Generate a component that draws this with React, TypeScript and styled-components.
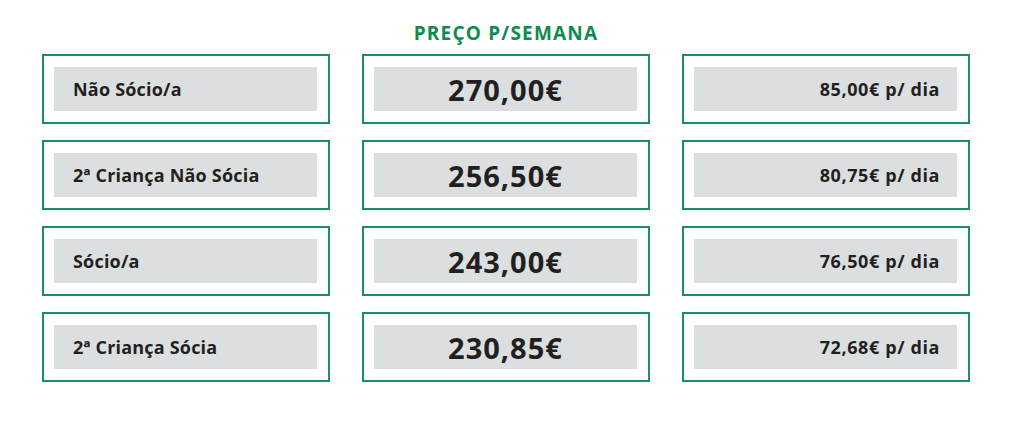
import React from 'react'
import styled, {createGlobalStyle} from 'styled-components'

const GlobalStyle = createGlobalStyle`
  html, body {
    margin: 0;
    padding: 0;
    background: #ffffff;
    font-family: "Open Sans", "Liberation Sans", sans-serif;
  }
`

const Page = styled.div`
  width: 1024px;
  height: 426px;
  box-sizing: border-box;
  padding: 21px 0 0 42px;
`

const Grid = styled.div`
  display: grid;
  grid-template-columns: repeat(3, 288px);
  column-gap: 32px;
  row-gap: 16px;
`

const Heading = styled.h2`
  grid-column: 1 / -1;
  margin: 0 0 -7px;
  text-align: center;
  color: #0f8a52;
  font-size: 19px;
  font-weight: 700;
  line-height: 24px;
  letter-spacing: 1.2px;
`

const Cell = styled.div`
  height: 70px;
  box-sizing: border-box;
  border: 2px solid #18925c;
  padding: 11px 11px 11px 10px;
`

const Inner = styled.div<{$align: 'left' | 'center' | 'right'}>`
  height: 100%;
  background: #dcdfe0;
  display: flex;
  align-items: center;
  justify-content: ${p => p.$align === 'left' ? 'flex-start' : p.$align === 'center' ? 'center' : 'flex-end'};
  padding: 0 ${p => p.$align === 'right' ? '17px' : '0'} 0 ${p => p.$align === 'left' ? '19px' : '0'};
  color: #231f20;
  font-weight: 700;
`

const Label = styled.span<{$spread?: boolean}>`
  font-size: 18px;
  letter-spacing: ${p => p.$spread ? '0.6px' : '0.2px'};
`

const Price = styled.span`
  font-size: 29px;
  letter-spacing: 1px;
`

const rows = [
    {label: 'Não Sócio/a', week: '270,00€', day: '85,00€ p/ dia'},
    {label: '2ª Criança Não Sócia', week: '256,50€', day: '80,75€ p/ dia'},
    {label: 'Sócio/a', week: '243,00€', day: '76,50€ p/ dia'},
    {label: '2ª Criança Sócia', week: '230,85€', day: '72,68€ p/ dia'},
]

const App: React.FC = () => {
    return <>
        <GlobalStyle/>
        <Page>
            <Grid>
                <Heading>PREÇO P/SEMANA</Heading>
                {
                    rows.map(row => <React.Fragment key={row.label}>
                        <Cell>
                            <Inner $align="left"><Label>{row.label}</Label></Inner>
                        </Cell>
                        <Cell>
                            <Inner $align="center"><Price>{row.week}</Price></Inner>
                        </Cell>
                        <Cell>
                            <Inner $align="right"><Label $spread>{row.day}</Label></Inner>
                        </Cell>
                    </React.Fragment>)
                }
            </Grid>
        </Page>
    </>
}

export default App
